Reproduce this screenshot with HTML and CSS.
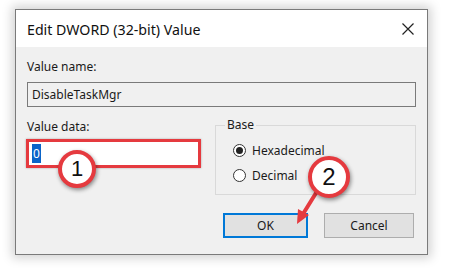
FILE: index.html
```html
<!DOCTYPE html>
<html>
<head>
<meta charset="utf-8">
<link rel="stylesheet" href="styles.css">
</head>
<body>
<div class="dialog">
  <div class="titlebar">
    <span class="title">Edit DWORD (32-bit) Value</span>
    <svg class="close" width="12" height="12" viewBox="0 0 12 12"><path d="M0.5 0.5 L11.5 11.5 M11.5 0.5 L0.5 11.5" stroke="#222" stroke-width="1.2" fill="none"/></svg>
  </div>
  <div class="content">
    <div class="label first">Value name:</div>
    <div class="field readonly">DisableTaskMgr</div>
    <div class="middle">
      <div class="datacol">
        <div class="label">Value data:</div>
        <div class="field data"><span class="sel">0</span></div>
      </div>
      <div class="group">
        <span class="legend">Base</span>
        <div class="radio"><span class="dot checked"></span>Hexadecimal</div>
        <div class="radio"><span class="dot"></span>Decimal</div>
      </div>
    </div>
    <div class="buttons">
      <div class="btn ok">OK</div>
      <div class="btn">Cancel</div>
    </div>
  </div>
</div>
<div class="redbox"></div>
<div class="badge b1">1</div>
<svg class="arrow" width="462" height="269" viewBox="0 0 462 269">
  <path d="M316 193 L303 214" stroke="#e53a3f" stroke-width="4" fill="none" stroke-linecap="round"/>
  <path d="M297 224 L298 209 L309 215 Z" fill="#e53a3f"/>
</svg>
<div class="badge b2">2</div>
</body>
</html>
```
FILE: styles.css
```css
html, body {
  margin: 0;
  padding: 0;
  background: #ffffff;
}
body {
  padding: 9px 0 0 15px;
  font-family: "Noto Sans", "Open Sans", sans-serif;
  font-size: 12px;
  color: #1a1a1a;
  position: relative;
  width: 462px;
  height: 269px;
  box-sizing: border-box;
  overflow: hidden;
}
.dialog {
  width: 413px;
  height: 246px;
  box-sizing: border-box;
  border: 1px solid #7a7a7a;
  background: #f0f0f0;
  box-shadow: 0 0 10px 3px rgba(0, 0, 0, 0.18);
  display: flex;
  flex-direction: column;
}
.titlebar {
  height: 37px;
  background: #ffffff;
  display: flex;
  align-items: center;
  justify-content: space-between;
  padding: 0 13px 0 11px;
  flex: none;
}
.title {
  font-size: 14.2px;
  color: #111;
  margin-top: 2px;
}
.close {
  display: block;
}
.content {
  padding: 0 11px;
  display: flex;
  flex-direction: column;
}
.label {
  line-height: 16px;
  height: 16px;
}
.label.first {
  margin-top: 12px;
}
.field {
  box-sizing: border-box;
  height: 25px;
  border: 1px solid #7a7a7a;
  margin-top: 7px;
  padding: 0 4px;
  line-height: 23px;
}
.field.readonly {
  background: #f0f0f0;
}
.field.data {
  background: #ffffff;
  margin-top: 6px;
}
.sel {
  background: #0a64c8;
  color: #ffffff;
  padding: 1px 1px;
}
.middle {
  display: grid;
  grid-template-columns: 173px 1fr;
  column-gap: 15px;
  margin-top: 12px;
}
.datacol {
  display: flex;
  flex-direction: column;
}
.group {
  border: 1px solid #d9d9d9;
  margin-top: 6px;
  height: 70px;
  box-sizing: border-box;
  padding: 0 0 0 17px;
  display: flex;
  flex-direction: column;
}
.legend {
  margin-top: -9px;
  margin-left: -8px;
  padding: 0 2px;
  align-self: flex-start;
  background: #f0f0f0;
  line-height: 16px;
  margin-bottom: 5px;
}
.radio {
  display: flex;
  align-items: center;
  height: 25px;
  line-height: 16px;
}
.dot {
  width: 13px;
  height: 13px;
  box-sizing: border-box;
  border: 1px solid #333;
  border-radius: 50%;
  background: #fff;
  margin-right: 6px;
  display: flex;
  align-items: center;
  justify-content: center;
}
.dot.checked::after {
  content: "";
  width: 7px;
  height: 7px;
  border-radius: 50%;
  background: #222;
}
.buttons {
  display: flex;
  justify-content: flex-end;
  gap: 16px;
  margin-top: 18px;
  padding-right: 2px;
}
.btn {
  box-sizing: border-box;
  width: 90px;
  height: 25px;
  border: 1px solid #adadad;
  background: #e1e1e1;
  text-align: center;
  line-height: 23px;
}
.btn.ok {
  width: 85px;
  border: 2px solid #0078d7;
  line-height: 21px;
}
.redbox {
  position: absolute;
  left: 26px;
  top: 139px;
  width: 175px;
  height: 29px;
  box-sizing: border-box;
  border: 3px solid #e53a3f;
  box-shadow: 0 0 2px rgba(0, 0, 0, 0.3);
}
.badge {
  position: absolute;
  box-sizing: border-box;
  border-radius: 50%;
  background: #fff;
  border: 4px solid #e53a3f;
  box-shadow: 1px 2px 4px rgba(0, 0, 0, 0.45);
  display: flex;
  align-items: center;
  justify-content: center;
  font-family: "Liberation Sans", Arial, sans-serif;
  color: #111;
}
.b1 {
  left: 58px;
  top: 150px;
  width: 38px;
  height: 38px;
  font-size: 22px;
}
.b2 {
  left: 308px;
  top: 156px;
  width: 42px;
  height: 42px;
  font-size: 24px;
}
.arrow {
  position: absolute;
  left: 0;
  top: 0;
}
```
